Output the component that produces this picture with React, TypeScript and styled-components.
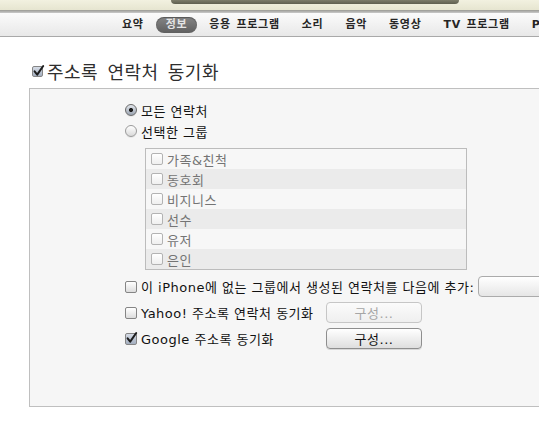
import React from "react";
import styled, { createGlobalStyle } from "styled-components";

const Global = createGlobalStyle`
  html, body { margin: 0; padding: 0; background: #fff; overflow: hidden; }
  body { font-family: "DejaVu Sans", "Noto Sans CJK KR", sans-serif; }
  #root { width: 539px; height: 426px; overflow: hidden; }
`;

const Page = styled.div`
  width: 539px;
  height: 426px;
  display: flex;
  flex-direction: column;
  background: #fff;
  overflow: hidden;
`;

const TopStrip = styled.div`
  flex: none;
  height: 10px;
  background: linear-gradient(#f2f1e0, #e6e5d0);
`;

const ProgressBar = styled.div`
  margin-left: 171px;
  width: 288px;
  height: 4px;
  border-radius: 0 0 5px 5px;
  background: linear-gradient(#7c7c6a, #5e5e4f);
`;

const Divider = styled.div`
  flex: none;
  height: 3px;
  background: linear-gradient(#9a9a94, #cacaca);
`;

const TabBar = styled.nav`
  flex: none;
  height: 24px;
  box-sizing: border-box;
  display: flex;
  align-items: center;
  gap: 2px;
  padding-left: 112px;
  background: linear-gradient(#fbfbfb, #e8e8e8);
  border-bottom: 1px solid #a9a9a9;
  white-space: nowrap;
  overflow: hidden;
`;

const Tab = styled.span<{ $active?: boolean }>`
  flex: none;
  height: 16px;
  line-height: 16px;
  padding: 0 10px;
  border-radius: 8px;
  font-size: 11px;
  font-weight: bold;
  letter-spacing: 0.7px;
  word-spacing: 1px;
  color: ${(p) => (p.$active ? "#e4e4e4" : "#262626")};
  background: ${(p) => (p.$active ? "linear-gradient(#858585, #5f5f5f)" : "transparent")};
  box-shadow: ${(p) => (p.$active ? "inset 0 1px 1px rgba(0,0,0,0.35)" : "none")};
`;

const Heading = styled.h2`
  margin: 22px 0 0;
  height: 24px;
  display: flex;
  align-items: center;
  gap: 4px;
  padding-left: 32px;
  font-size: 18px;
  font-weight: normal;
  letter-spacing: 0.5px;
  word-spacing: 3px;
  color: #2e2e2e;
`;

const Panel = styled.section`
  margin: 5px 0 0 29px;
  width: 520px;
  height: 319px;
  box-sizing: border-box;
  border: 1px solid #bfbfbf;
  background: #f6f6f6;
  padding: 12px 0 0 95px;
  display: flex;
  flex-direction: column;
  letter-spacing: 0.5px;
`;

const OptionRow = styled.label`
  display: flex;
  align-items: center;
  gap: 4px;
  height: 18px;
  font-size: 13px;
  color: #111;
  white-space: nowrap;
`;

const RadioGroup = styled.div`
  display: flex;
  flex-direction: column;
  gap: 3px;
`;

const RadioDot = styled.span<{ $on?: boolean }>`
  flex: none;
  width: 12px;
  height: 12px;
  box-sizing: border-box;
  border-radius: 50%;
  border: 1px solid ${(p) => (p.$on ? "#6a6a6a" : "#9a9a9a")};
  background: ${(p) =>
    p.$on
      ? "radial-gradient(circle at 50% 50%, #1c1c1c 0 1.8px, transparent 2.3px), linear-gradient(#e2e6ec, #9aa3b0)"
      : "linear-gradient(#ffffff, #d9d9d9)"};
  box-shadow: 0 1px 0 rgba(0,0,0,0.06);
`;

const Box = styled.span<{ $on?: boolean; $dim?: boolean; $size?: number }>`
  flex: none;
  position: relative;
  width: ${(p) => p.$size ?? 12}px;
  height: ${(p) => p.$size ?? 12}px;
  box-sizing: border-box;
  border-radius: 2px;
  border: 1px solid ${(p) => (p.$dim ? "#b3b3b3" : "#858585")};
  background: ${(p) =>
    p.$on
      ? "linear-gradient(#d6dce6, #a3aebf)"
      : p.$dim
      ? "linear-gradient(#ffffff, #efefef)"
      : "linear-gradient(#ffffff, #dcdcdc)"};
  svg {
    position: absolute;
    left: -1px;
    top: -3px;
    overflow: visible;
  }
`;

const Check = ({ on, dim, size }: { on?: boolean; dim?: boolean; size?: number }) => (
  <Box $on={on} $dim={dim} $size={size}>
    {on && (
      <svg width="13" height="13" viewBox="0 0 13 13">
        <path d="M2.6 7.4 L5.2 10.6 L11.2 2" fill="none" stroke="#1d1d1d" strokeWidth="2" strokeLinecap="round" strokeLinejoin="round" />
      </svg>
    )}
  </Box>
);

const GroupList = styled.ul`
  list-style: none;
  margin: 8px 0 0 20px;
  padding: 0;
  width: 322px;
  box-sizing: border-box;
  border: 1px solid #bcbcbc;
  background: #f7f7f7;
`;

const GroupItem = styled.li`
  height: 20px;
  display: flex;
  align-items: center;
  gap: 4px;
  padding-left: 5px;
  font-size: 13px;
  color: #747474;
  &:nth-child(even) {
    background: #ebebeb;
  }
`;

const SyncRows = styled.div`
  margin-top: 6px;
  display: flex;
  flex-direction: column;
  gap: 5px;
`;

const SyncRow = styled.div`
  display: flex;
  align-items: center;
  height: 21px;
  font-size: 13px;
  color: #111;
  white-space: nowrap;
`;

const SyncLabel = styled.span<{ $w?: number }>`
  display: flex;
  align-items: center;
  gap: 4px;
  width: ${(p) => (p.$w ? `${p.$w}px` : "auto")};
  flex: none;
`;

const PopUp = styled.span`
  flex: none;
  margin-left: 4px;
  width: 110px;
  height: 21px;
  box-sizing: border-box;
  border: 1px solid #ababab;
  border-radius: 4px;
  background: linear-gradient(#ffffff, #e6e6e6);
`;

const Button = styled.span<{ $disabled?: boolean }>`
  flex: none;
  width: 96px;
  height: 21px;
  box-sizing: border-box;
  display: flex;
  align-items: center;
  justify-content: center;
  border-radius: 4px;
  border: 1px solid ${(p) => (p.$disabled ? "#c6c6c6" : "#8e8e8e")};
  background: ${(p) =>
    p.$disabled ? "linear-gradient(#fbfbfb, #efefef)" : "linear-gradient(#ffffff, #dedede)"};
  box-shadow: ${(p) => (p.$disabled ? "none" : "0 1px 0 rgba(0,0,0,0.12)")};
  color: ${(p) => (p.$disabled ? "#a6a6a6" : "#111")};
  font-size: 13px;
`;

const tabs = ["요약", "정보", "응용 프로그램", "소리", "음악", "동영상", "TV 프로그램", "Podcast"];
const groups = ["가족&친척", "동호회", "비지니스", "선수", "유저", "은인"];

export default function App() {
  return (
    <Page>
      <Global />
      <TopStrip>
        <ProgressBar />
      </TopStrip>
      <Divider />
      <TabBar>
        {tabs.map((t) => (
          <Tab key={t} $active={t === "정보"}>
            {t}
          </Tab>
        ))}
      </TabBar>
      <Heading>
        <Check on size={11} />
        <span>주소록 연락처 동기화</span>
      </Heading>
      <Panel>
        <RadioGroup>
          <OptionRow>
            <RadioDot $on />
            모든 연락처
          </OptionRow>
          <OptionRow>
            <RadioDot />
            선택한 그룹
          </OptionRow>
        </RadioGroup>
        <GroupList>
          {groups.map((g) => (
            <GroupItem key={g}>
              <Check dim />
              {g}
            </GroupItem>
          ))}
        </GroupList>
        <SyncRows>
          <SyncRow>
            <SyncLabel>
              <Check />
              이 iPhone에 없는 그룹에서 생성된 연락처를 다음에 추가:
            </SyncLabel>
            <PopUp />
          </SyncRow>
          <SyncRow>
            <SyncLabel $w={201}>
              <Check />
              Yahoo! 주소록 연락처 동기화
            </SyncLabel>
            <Button $disabled>구성...</Button>
          </SyncRow>
          <SyncRow>
            <SyncLabel $w={201}>
              <Check on />
              Google 주소록 동기화
            </SyncLabel>
            <Button>구성...</Button>
          </SyncRow>
        </SyncRows>
      </Panel>
    </Page>
  );
}
